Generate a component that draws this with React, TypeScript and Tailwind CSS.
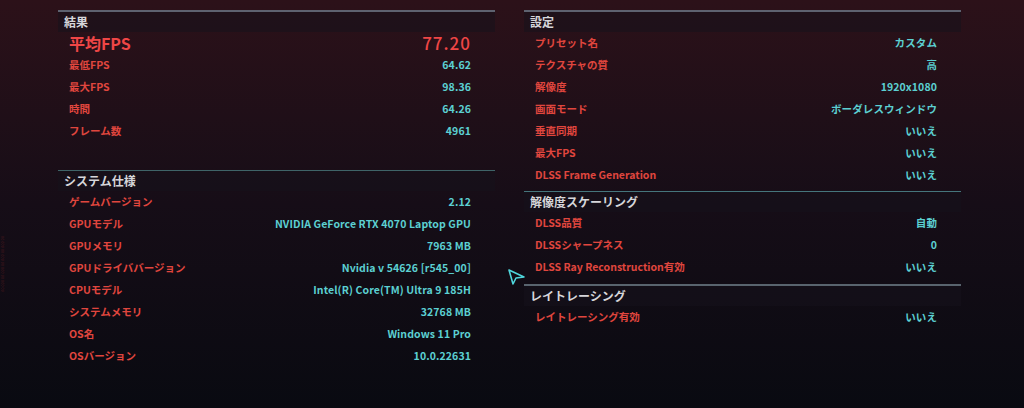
import React from "react";

type Row = { label: string; value: string };

const results: Row[] = [
  { label: "最低FPS", value: "64.62" },
  { label: "最大FPS", value: "98.36" },
  { label: "時間", value: "64.26" },
  { label: "フレーム数", value: "4961" },
];

const system: Row[] = [
  { label: "ゲームバージョン", value: "2.12" },
  { label: "GPUモデル", value: "NVIDIA GeForce RTX 4070 Laptop GPU" },
  { label: "GPUメモリ", value: "7963 MB" },
  { label: "GPUドライババージョン", value: "Nvidia v 54626 [r545_00]" },
  { label: "CPUモデル", value: "Intel(R) Core(TM) Ultra 9 185H" },
  { label: "システムメモリ", value: "32768 MB" },
  { label: "OS名", value: "Windows 11 Pro" },
  { label: "OSバージョン", value: "10.0.22631" },
];

const settings: Row[] = [
  { label: "プリセット名", value: "カスタム" },
  { label: "テクスチャの質", value: "高" },
  { label: "解像度", value: "1920x1080" },
  { label: "画面モード", value: "ボーダレスウィンドウ" },
  { label: "垂直同期", value: "いいえ" },
  { label: "最大FPS", value: "いいえ" },
  { label: "DLSS Frame Generation", value: "いいえ" },
];

const scaling: Row[] = [
  { label: "DLSS品質", value: "自動" },
  { label: "DLSSシャープネス", value: "0" },
  { label: "DLSS Ray Reconstruction有効", value: "いいえ" },
];

const raytracing: Row[] = [{ label: "レイトレーシング有効", value: "いいえ" }];

function Header({ title, line = "bg-[#5e6270]" }: { title: string; line?: string }) {
  return (
    <div>
      <div className={`h-[1.5px] ${line}`} />
      <div className="h-[20px] flex items-center pl-[6px] bg-[#15121c]/55 text-[12px] font-bold text-[#d6d6da]">
        {title}
      </div>
    </div>
  );
}

function Rows({ rows }: { rows: Row[] }) {
  return (
    <div className="pl-[11px] pr-[24px]">
      {rows.map((r) => (
        <div key={r.label} className="h-[22px] flex items-center justify-between text-[10.5px] font-bold">
          <span className="text-[#e0463e]">{r.label}</span>
          <span className="text-[#5cd0d2] tracking-[0.1px]">{r.value}</span>
        </div>
      ))}
    </div>
  );
}

export default function App() {
  return (
    <div
      className="relative w-[1024px] h-[408px] overflow-hidden bg-gradient-to-b from-[#2c1119] via-[#160d17] to-[#090a11]"
      style={{ fontFamily: '"Noto Sans CJK JP", "Noto Sans", sans-serif' }}
    >
      {/* faint vertical ticker on the left edge */}
      <div className="absolute left-[1px] top-[236px] text-[4px] leading-none text-[#e2433f]/30 [writing-mode:vertical-rl]">
        00 000 00 000 00 000 00 000 00
      </div>

      <div className="flex gap-[29px] pl-[58px] pt-[10px]">
        {/* left column */}
        <div className="w-[437px]">
          <Header title="結果" />
          <div className="pl-[11px] pr-[24px]">
            <div className="h-[22px] flex items-center justify-between">
              <span className="text-[16px] font-bold text-[#ef4646]">平均FPS</span>
              <span className="text-[17px] font-medium tracking-[1px] text-[#ef4646]">77.20</span>
            </div>
          </div>
          <Rows rows={results} />
          <div className="h-[28px]" />
          <Header title="システム仕様" line="bg-[#3f6468]" />
          <Rows rows={system} />
        </div>

        {/* right column */}
        <div className="w-[437px]">
          <Header title="設定" />
          <Rows rows={settings} />
          <div className="h-[5px]" />
          <Header title="解像度スケーリング" line="bg-[#45757c]" />
          <Rows rows={scaling} />
          <div className="h-[6px]" />
          <Header title="レイトレーシング" line="bg-[#59646e]" />
          <Rows rows={raytracing} />
        </div>
      </div>

      {/* mouse cursor */}
      <svg className="absolute left-[507px] top-[268px]" width="20" height="18" viewBox="0 0 20 18">
        <path d="M2 2 L17 9 L9 10 L6 16 Z" fill="none" stroke="#4fd6dc" strokeWidth="1.6" strokeLinejoin="round" />
      </svg>
    </div>
  );
}
